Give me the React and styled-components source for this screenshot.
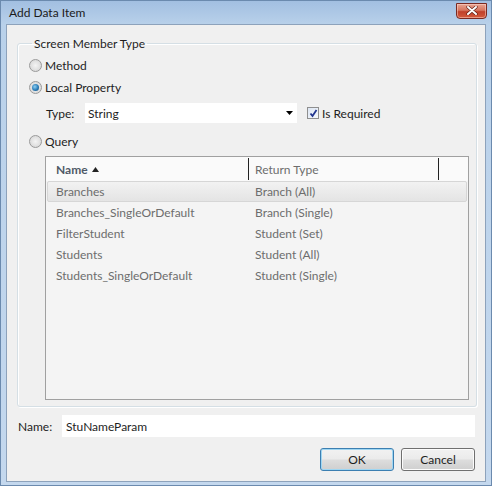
import React from "react";
import styled, { createGlobalStyle } from "styled-components";

const Global = createGlobalStyle`
  html, body { margin: 0; padding: 0; }
  body {
    width: 492px;
    height: 486px;
    overflow: hidden;
    font-family: "Lato", "Noto Sans", sans-serif;
    font-size: 12px;
    color: #1e1e1e;
  }
`;

const Window = styled.div`
  width: 492px;
  height: 486px;
  box-sizing: border-box;
  display: flex;
  flex-direction: column;
  background: linear-gradient(180deg, #a2bfe1 0px, #b9d1ea 24px, #c4d8ee 100%);
  border: 1px solid #6b8aae;
`;

const TitleBar = styled.div`
  height: 23px;
  display: flex;
  align-items: center;
  justify-content: space-between;
  padding: 0 4px 0 8px;
  flex-shrink: 0;
`;

const Title = styled.span`
  color: #1b1b1b;
  margin-top: -1px;
`;

const CloseButton = styled.div`
  width: 31px;
  height: 16px;
  margin-top: -4px;
  box-sizing: border-box;
  border: 1px solid #7a2a22;
  border-radius: 0 0 4px 4px;
  background: linear-gradient(180deg, #e8a493 0%, #d6755e 45%, #c0402a 55%, #d45b3c 100%);
  display: flex;
  align-items: center;
  justify-content: center;
  box-shadow: inset 0 0 0 1px rgba(255, 220, 210, 0.5);
`;

const Client = styled.div`
  flex: 1;
  margin: 0 5px 3px 5px;
  background: #f0f0f0;
  border: 1px solid #8da2bb;
  display: flex;
  flex-direction: column;
  padding: 11px 8px 10px 10px;
  box-sizing: border-box;
`;

const Group = styled.fieldset`
  margin: 0;
  padding: 3px 7px 6px 10px;
  border: 1px solid #d5dfe5;
  border-radius: 3px;
  box-shadow: inset 1px 1px 0 #fff, 1px 1px 0 #fff;
  flex: 1;
  display: flex;
  flex-direction: column;
`;

const Legend = styled.legend`
  padding: 0 2px;
  margin-left: 4px;
  color: #1e1e1e;
`;

const RadioRow = styled.label`
  display: flex;
  align-items: center;
  gap: 3px;
  height: 22px;
  margin-left: 1px;
`;

const RadioDot = styled.span`
  width: 13px;
  height: 13px;
  box-sizing: border-box;
  border-radius: 50%;
  border: 1px solid #9a9a9a;
  background: radial-gradient(circle at 50% 50%, #f4f4f4 0%, #dcdcdc 70%, #cfcfcf 100%);
  display: flex;
  align-items: center;
  justify-content: center;
  &::after {
    content: "";
    display: ${(p) => (p.$on ? "block" : "none")};
    width: 7px;
    height: 7px;
    border-radius: 50%;
    background: radial-gradient(circle at 40% 40%, #8fd0f2 0%, #2a7cb8 55%, #15486f 100%);
  }
`;

const TypeRow = styled.div`
  display: flex;
  align-items: center;
  height: 26px;
  margin: 2px 0 4px;
  padding-left: 18px;
`;

const TypeLabel = styled.span`
  width: 39px;
`;

const Combo = styled.div`
  width: 212px;
  height: 20px;
  background: #fff;
  display: flex;
  align-items: center;
  justify-content: space-between;
  padding: 0 4px 0 3px;
  box-sizing: border-box;
`;

const CheckRow = styled.label`
  display: flex;
  align-items: center;
  gap: 3px;
  margin-left: 10px;
`;

const CheckBox = styled.span`
  width: 12px;
  height: 12px;
  box-sizing: border-box;
  border: 1px solid #8f8f8f;
  background: linear-gradient(135deg, #dde6f3 0%, #f5f8fc 100%);
  display: flex;
  align-items: center;
  justify-content: center;
`;

const List = styled.div`
  margin: 4px 0 0 17px;
  flex: 1;
  border: 1px solid #a0a0a0;
  background: #f4f4f4;
  display: flex;
  flex-direction: column;
`;

const Header = styled.div`
  display: grid;
  grid-template-columns: 203px 190px 1fr;
  height: 24px;
  background: #fafafa;
`;

const HeaderCell = styled.div`
  display: flex;
  align-items: center;
  gap: 4px;
  padding-left: ${(p) => p.$pad}px;
  font-weight: ${(p) => (p.$bold ? 700 : 400)};
  color: ${(p) => (p.$bold ? "#505a68" : "#6d6d6d")};
  border-right: ${(p) => (p.$divider ? "1px solid #222" : "none")};
  margin: 1px 0;
`;

const Row = styled.div`
  display: grid;
  grid-template-columns: 200px 1fr;
  height: 21px;
  align-items: center;
  color: #6d6d6d;
  margin: 0 1px;
  box-sizing: border-box;
  border-radius: 2px;
  border: 1px solid ${(p) => (p.$selected ? "#d6d6d6" : "transparent")};
  background: ${(p) =>
    p.$selected ? "linear-gradient(180deg, #f2f2f2 0%, #e4e4e4 100%)" : "transparent"};
`;

const Cell = styled.span`
  padding-left: ${(p) => p.$pad}px;
`;

const NameRow = styled.div`
  display: flex;
  align-items: center;
  margin-top: 8px;
  height: 22px;
`;

const NameLabel = styled.span`
  width: 44px;
  padding-left: 1px;
`;

const TextBox = styled.div`
  flex: 1;
  height: 22px;
  background: #fff;
  display: flex;
  align-items: center;
  padding-left: 4px;
  margin-right: 2px;
`;

const Buttons = styled.div`
  display: flex;
  justify-content: flex-end;
  gap: 7px;
  margin-top: 11px;
  margin-right: 2px;
`;

const Button = styled.div`
  width: 74px;
  height: 23px;
  box-sizing: border-box;
  border-radius: 3px;
  border: 1px solid ${(p) => (p.$default ? "#3c7fb1" : "#707070")};
  background: linear-gradient(180deg, #f2f2f2 0%, #ebebeb 48%, #dddddd 52%, #cfcfcf 100%);
  box-shadow: inset 0 0 0 1px ${(p) => (p.$default ? "#9fd6f2" : "#fcfcfc")};
  display: flex;
  align-items: center;
  justify-content: center;
  color: #1e1e1e;
`;

const rows = [
  ["Branches", "Branch (All)"],
  ["Branches_SingleOrDefault", "Branch (Single)"],
  ["FilterStudent", "Student (Set)"],
  ["Students", "Student (All)"],
  ["Students_SingleOrDefault", "Student (Single)"],
];

export default function App() {
  return (
    <>
      <Global />
      <Window>
        <TitleBar>
          <Title>Add Data Item</Title>
          <CloseButton>
            <svg width="12" height="9" viewBox="0 0 12 9">
              <path d="M2 1 L10 8 M10 1 L2 8" stroke="#5a1a10" strokeWidth="3.2" strokeLinecap="round" />
              <path d="M2 1 L10 8 M10 1 L2 8" stroke="#fff" strokeWidth="2" strokeLinecap="round" />
            </svg>
          </CloseButton>
        </TitleBar>
        <Client>
          <Group>
            <Legend>Screen Member Type</Legend>
            <RadioRow>
              <RadioDot />
              Method
            </RadioRow>
            <RadioRow>
              <RadioDot $on />
              Local Property
            </RadioRow>
            <TypeRow>
              <TypeLabel>Type:</TypeLabel>
              <Combo>
                <span>String</span>
                <svg width="7" height="4" viewBox="0 0 7 4">
                  <path d="M0 0 H7 L3.5 4 Z" fill="#000" />
                </svg>
              </Combo>
              <CheckRow>
                <CheckBox>
                  <svg width="9" height="9" viewBox="0 0 9 9">
                    <path d="M1.5 4.5 L3.5 7 L7.5 1" stroke="#21358f" strokeWidth="1.8" fill="none" />
                  </svg>
                </CheckBox>
                Is Required
              </CheckRow>
            </TypeRow>
            <RadioRow>
              <RadioDot />
              Query
            </RadioRow>
            <List>
              <Header>
                <HeaderCell $pad={10} $bold $divider>
                  Name
                  <svg width="7" height="5" viewBox="0 0 7 5">
                    <path d="M0 5 H7 L3.5 0 Z" fill="#222" />
                  </svg>
                </HeaderCell>
                <HeaderCell $pad={6} $divider>Return Type</HeaderCell>
                <HeaderCell />
              </Header>
              {rows.map(([n, t], i) => (
                <Row key={n} $selected={i === 0}>
                  <Cell $pad={8}>{n}</Cell>
                  <Cell $pad={7}>{t}</Cell>
                </Row>
              ))}
            </List>
          </Group>
          <NameRow>
            <NameLabel>Name:</NameLabel>
            <TextBox>StuNameParam</TextBox>
          </NameRow>
          <Buttons>
            <Button $default>OK</Button>
            <Button>Cancel</Button>
          </Buttons>
        </Client>
      </Window>
    </>
  );
}
